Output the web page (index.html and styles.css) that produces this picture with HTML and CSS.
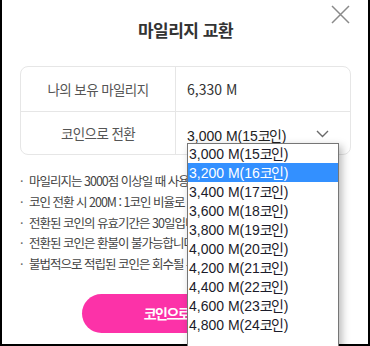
FILE: index.html
```html
<!DOCTYPE html>
<html lang="ko">
<head>
<meta charset="utf-8">
<link rel="stylesheet" href="styles.css">
</head>
<body>
<div class="modal">
  <button class="close" aria-label="닫기">
    <svg width="19" height="19" viewBox="0 0 19 19"><path d="M1 1 L18 18 M18 1 L1 18" stroke="#8a8a8a" stroke-width="1.5" fill="none"/></svg>
  </button>
  <h1 class="title">마일리지 교환</h1>
  <div class="info">
    <div class="row">
      <div class="label">나의 보유 마일리지</div>
      <div class="value">6,330 M</div>
    </div>
    <div class="row">
      <div class="label">코인으로 전환</div>
      <div class="value select">
        <span>3,000 M(15<span class="ko">코인</span>)</span>
        <svg class="chev" width="13" height="8" viewBox="0 0 13 8"><path d="M1 1 L6.5 6.5 L12 1" stroke="#6a6a6a" stroke-width="1.4" fill="none"/></svg>
      </div>
    </div>
  </div>
  <ul class="notes">
    <li>마일리지는 3000점 이상일 때 사용 가능합니다.</li>
    <li>코인 전환 시 200M : 1코인 비율로 전환됩니다.</li>
    <li>전환된 코인의 유효기간은 30일입니다.</li>
    <li>전환된 코인은 환불이 불가능합니다.</li>
    <li>불법적으로 적립된 코인은 회수될 수 있습니다.</li>
  </ul>
  <div class="actions">
    <button class="submit">코인으로 전환</button>
  </div>
</div>
<ul class="dropdown">
  <li>3,000 M(15<span class="ko">코인</span>)</li>
  <li class="active">3,200 M(16<span class="ko">코인</span>)</li>
  <li>3,400 M(17<span class="ko">코인</span>)</li>
  <li>3,600 M(18<span class="ko">코인</span>)</li>
  <li>3,800 M(19<span class="ko">코인</span>)</li>
  <li>4,000 M(20<span class="ko">코인</span>)</li>
  <li>4,200 M(21<span class="ko">코인</span>)</li>
  <li>4,400 M(22<span class="ko">코인</span>)</li>
  <li>4,600 M(23<span class="ko">코인</span>)</li>
  <li>4,800 M(24<span class="ko">코인</span>)</li>
</ul>
</body>
</html>
```
FILE: styles.css
```css
html, body {
  margin: 0;
  padding: 0;
  width: 370px;
  height: 346px;
  overflow: hidden;
  background: #fff;
}
body {
  position: relative;
  font-family: "Noto Sans CJK KR", "Noto Sans", sans-serif;
  color: #333;
}
.modal {
  position: relative;
  box-sizing: border-box;
  width: 370px;
  height: 346px;
  border: 2px solid #000;
  border-top: none;
  padding: 18px 17px 0 18px;
  background: #fff;
}
.close {
  position: absolute;
  top: 5px;
  right: 18px;
  width: 19px;
  height: 19px;
  padding: 0;
  border: none;
  background: none;
}
.close svg { display: block; }
.title {
  margin: 0 0 24px;
  font-size: 17px;
  line-height: 24px;
  font-weight: 700;
  letter-spacing: -0.5px;
  text-align: center;
  color: #333;
}
.info {
  border: 1px solid #e6e6e6;
  border-radius: 8px;
}
.row {
  display: grid;
  grid-template-columns: 155px 1fr;
  height: 44px;
}
.row + .row {
  border-top: 1px solid #e6e6e6;
  height: 42px;
}
.label {
  display: flex;
  align-items: center;
  justify-content: center;
  border-right: 1px solid #e6e6e6;
  font-size: 13.5px;
  letter-spacing: -0.6px;
  color: #555;
}
.value {
  display: flex;
  align-items: center;
  padding-left: 11px;
  font-size: 14px;
  color: #333;
}
.select {
  justify-content: space-between;
  padding-right: 21px;
  padding-top: 4px;
  font-family: "Liberation Sans", "Noto Sans CJK KR", sans-serif;
  color: #222;
}
.ko {
  font-family: "Noto Sans CJK KR", sans-serif;
  letter-spacing: -1.8px;
  margin-right: 1.8px;
}
.chev { display: block; margin-top: -2px; }
.notes {
  list-style: none;
  margin: 16px 0 0;
  padding: 0;
  font-size: 12.5px;
  line-height: 20.8px;
  letter-spacing: -1px;
  color: #444;
  white-space: nowrap;
}
.notes li {
  position: relative;
  padding-left: 9px;
}
.notes li::before {
  content: "·";
  position: absolute;
  left: 0;
  top: 0;
  color: #666;
}
.actions {
  display: flex;
  justify-content: center;
  margin-top: 19px;
  padding-right: 1px;
}
.submit {
  width: 206px;
  height: 39px;
  padding: 0 12px 0 0;
  border: none;
  border-radius: 20px;
  background: #fc32a8;
  color: #fff;
  font-family: "Noto Sans CJK KR", "Noto Sans", sans-serif;
  font-size: 14px;
  font-weight: 700;
  letter-spacing: -1.5px;
}
.dropdown {
  position: absolute;
  left: 187px;
  top: 143px;
  width: 152px;
  height: 215px;
  box-sizing: border-box;
  margin: 0;
  padding: 0;
  list-style: none;
  border: 1px solid #767676;
  background: #fff;
  box-shadow: 3px 3px 8px rgba(0, 0, 0, 0.28);
  font-family: "Liberation Sans", "Noto Sans CJK KR", sans-serif;
  font-size: 14px;
  z-index: 10;
}
.dropdown li {
  height: 19px;
  line-height: 19px;
  padding-left: 1px;
  color: #1b1b2a;
  white-space: nowrap;
}
.dropdown li.active {
  background: #3390ff;
  color: #fff;
}
```
